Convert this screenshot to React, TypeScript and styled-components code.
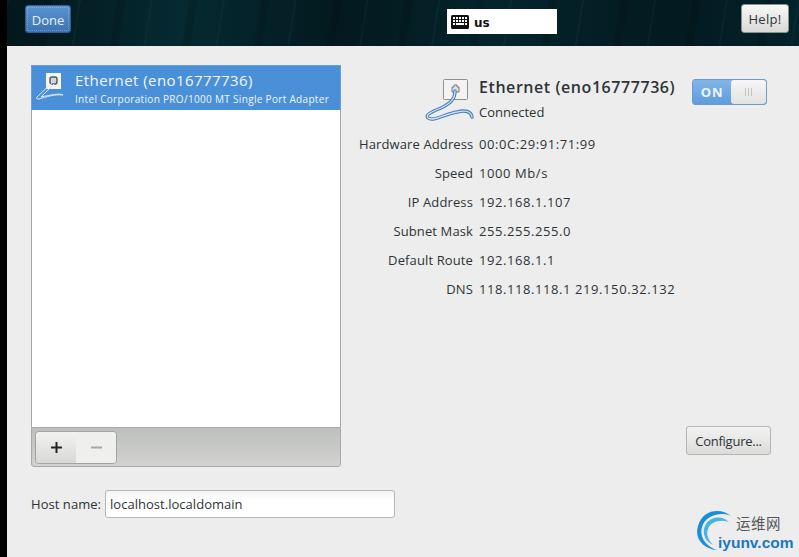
import React from 'react';
import styled, { createGlobalStyle } from 'styled-components';

const GlobalStyle = createGlobalStyle`
    html, body {
        margin: 0;
        padding: 0;
        height: 100%;
        background: #000;
        overflow: hidden;
    }
    body {
        font-family: "Open Sans", "Noto Sans", "Noto Sans CJK SC", sans-serif;
        font-size: 13px;
        color: #2e3436;
    }
`;

const Screen = styled.div`
    width: 799px;
    height: 557px;
    display: flex;
    background: #000;
`;

const Main = styled.div`
    position: relative;
    margin-left: 7px;
    flex: 1;
    display: flex;
    flex-direction: column;
    background: #ededed;
`;

const Header = styled.header`
    height: 46px;
    box-sizing: border-box;
    padding: 5px 10px 0 18px;
    display: grid;
    grid-template-columns: 422px 110px 1fr;
    align-items: start;
    background:
        repeating-linear-gradient(99deg, rgba(60, 120, 125, 0.07) 0 2px, rgba(0, 0, 0, 0) 2px 38px, rgba(0, 0, 0, 0.12) 38px 46px, rgba(0, 0, 0, 0) 46px 71px),
        linear-gradient(90deg, #03171c 0%, #052a31 22%, #03191f 42%, #04242b 62%, #031a20 84%, #04222a 100%);
`;

const DoneButton = styled.button`
    width: 46px;
    height: 28px;
    padding: 2px 0 0;
    border: 1px solid #2f5f96;
    border-radius: 3px;
    background: linear-gradient(#5a93cf, #3d73b4);
    outline: 1px dotted rgba(255, 255, 255, 0.25);
    outline-offset: -3px;
    color: #e8eef5;
    font: inherit;
`;

const Keyboard = styled.div`
    margin-top: 4px;
    width: 110px;
    height: 25px;
    box-sizing: border-box;
    padding-left: 4px;
    display: flex;
    align-items: center;
    gap: 5px;
    background: #fff;
    color: #111;
    font-family: "DejaVu Sans", sans-serif;
    font-weight: 700;
    font-size: 12px;
`;

const KeyboardLabel = styled.span`
    padding-top: 3px;
`;

const HelpButton = styled.button`
    justify-self: end;
    margin-top: -1px;
    width: 48px;
    height: 29px;
    padding: 0;
    border: 1px solid #8a8f90;
    border-radius: 3px;
    background: linear-gradient(#f7f7f6, #d9d9d7);
    color: #2e3436;
    font: inherit;
    letter-spacing: 0.3px;
`;

const Body = styled.div`
    flex: 1;
    display: grid;
    grid-template-columns: 310px 1fr;
    column-gap: 10px;
    padding: 19px 28px 0 24px;
`;

const LeftColumn = styled.div`
    display: flex;
    flex-direction: column;
`;

const ListBox = styled.div`
    height: 362px;
    box-sizing: border-box;
    border: 1px solid #a4a6a4;
    border-bottom: none;
    background: #fff;
`;

const ListRow = styled.div`
    height: 45px;
    box-sizing: border-box;
    margin: -1px -1px 0;
    display: flex;
    align-items: flex-start;
    background: #4a90d9;
    border: 1px solid #6a9fd6;
    border-bottom: none;
    color: #f2f6fb;
`;

const RowIcon = styled.div`
    width: 43px;
    flex: none;
    padding: 6px 0 0 4px;
    box-sizing: border-box;
`;

const RowText = styled.div`
    display: flex;
    flex-direction: column;
`;

const RowTitle = styled.div`
    margin-top: 3px;
    font-size: 15px;
    line-height: 22px;
    letter-spacing: 0.43px;
`;

const RowSub = styled.div`
    font-size: 10px;
    line-height: 16px;
    letter-spacing: 0.32px;
    white-space: nowrap;
`;

const ListToolbar = styled.div`
    height: 40px;
    box-sizing: border-box;
    padding: 3px 0 0 3px;
    border: 1px solid #a9aba8;
    border-radius: 0 0 3px 3px;
    background: linear-gradient(#bdbfbc, #d2d3d0);
`;

const ButtonGroup = styled.div`
    display: inline-flex;
    height: 33px;
    box-sizing: border-box;
    border: 1px solid #a2a4a2;
    border-radius: 4px;
    overflow: hidden;
`;

const ToolButton = styled.div<{ $disabled?: boolean }>`
    width: 40px;
    display: flex;
    align-items: center;
    justify-content: center;
    background: ${(p) => (p.$disabled ? '#efefee' : 'linear-gradient(#f2f2f1, #d8d8d6)')};
    color: ${(p) => (p.$disabled ? '#a6a8a6' : '#222')};
`;

const HostRow = styled.div`
    margin-top: 23px;
    width: max-content;
    display: flex;
    align-items: center;
    gap: 6px;
`;

const HostLabel = styled.span`
    width: 68px;
    white-space: nowrap;
    letter-spacing: 0.05px;
`;

const HostInput = styled.div`
    width: 290px;
    height: 28px;
    box-sizing: border-box;
    padding-left: 4px;
    display: flex;
    align-items: center;
    border: 1px solid #b5b7b5;
    border-radius: 3px;
    background: linear-gradient(#f4f4f4, #fff 40%);
    white-space: nowrap;
    letter-spacing: 0.03px;
`;

const RightColumn = styled.div`
    display: flex;
    flex-direction: column;
`;

const DeviceHead = styled.div`
    display: flex;
    height: 60px;
    padding-left: 66px;
`;

const DeviceIcon = styled.div`
    width: 62px;
    flex: none;
    padding: 14px 0 0 8px;
    box-sizing: border-box;
`;

const DeviceText = styled.div`
    width: 209px;
    flex: none;
    padding-top: 12px;
`;

const DeviceName = styled.div`
    font-size: 16px;
    line-height: 20px;
    font-weight: 600;
    letter-spacing: 0.56px;
    white-space: nowrap;
`;

const DeviceState = styled.div`
    margin-top: 6px;
    line-height: 18px;
`;

const Toggle = styled.div`
    margin-top: 14px;
    margin-left: 4px;
    width: 75px;
    flex: none;
    height: 26px;
    box-sizing: border-box;
    display: flex;
    border: 1px solid #6b9bd1;
    border-radius: 3px;
    background: linear-gradient(#82b6ea, #5f9bdc);
    overflow: hidden;
`;

const ToggleOn = styled.div`
    width: 38px;
    display: flex;
    align-items: center;
    justify-content: center;
    color: #edf4fb;
    font-weight: 700;
    letter-spacing: 0.8px;
`;

const ToggleKnob = styled.div`
    flex: 1;
    display: flex;
    align-items: center;
    justify-content: center;
    gap: 2px;
    background: linear-gradient(#f6f6f5, #e2e2e0);
    border-radius: 3px;
`;

const KnobLine = styled.span`
    width: 1px;
    height: 8px;
    background: #c2c4c2;
`;

const InfoGrid = styled.dl`
    margin: 10px 0 0;
    padding-left: 8px;
    display: grid;
    grid-template-columns: 114px 1fr;
    column-gap: 6px;
    grid-auto-rows: 29px;
    line-height: 18px;
`;

const InfoLabel = styled.dt`
    text-align: right;
    white-space: nowrap;
    letter-spacing: 0.12px;
`;

const InfoValue = styled.dd`
    margin: 0;
    white-space: nowrap;
    letter-spacing: 0.58px;
`;

const ConfigureRow = styled.div`
    margin-top: 117px;
    display: flex;
    justify-content: flex-end;
`;

const ConfigureButton = styled.button`
    width: 85px;
    height: 29px;
    padding: 0;
    border: 1px solid #b4b6b4;
    border-radius: 3px;
    background: linear-gradient(#f2f2f1, #dcdcda);
    color: #2e3436;
    font: inherit;
    letter-spacing: -0.25px;
`;

const Watermark = styled.div`
    position: absolute;
    left: 688px;
    top: 509px;
    width: 104px;
    height: 44px;
`;

const WatermarkCn = styled.div`
    position: absolute;
    left: 41px;
    top: 7px;
    font-family: "Noto Sans CJK SC", sans-serif;
    font-size: 14.5px;
    line-height: 14px;
    letter-spacing: 0.5px;
    color: #555;
`;

const WatermarkEn = styled.div`
    position: absolute;
    left: 23px;
    top: 26px;
    font-family: "Liberation Sans", sans-serif;
    font-weight: 700;
    font-size: 15.5px;
    line-height: 16px;
    color: #1a78c2;
`;

const SmallEthernetIcon = () => (
    <svg width="34" height="32" viewBox="0 0 34 32">
        <rect x="10" y="1" width="15" height="16" fill="#f4f4f2" />
        <rect x="14" y="5" width="7" height="7" rx="2" fill="#cfd6de" stroke="#555" strokeWidth="1.4" />
        <path d="M17 10 L1 25 C0 27 1 27 3 27 C10 25 18 22 27 23 C24 21 14 23 5 25 L18 12" fill="none" stroke="#dfe9f5" strokeWidth="1" />
    </svg>
);

const LargeEthernetIcon = () => (
    <svg width="50" height="44" viewBox="0 0 50 44">
        <rect x="18.5" y="0.5" width="24" height="20" rx="1" fill="#f3f3f2" stroke="#8f918f" />
        <path d="M27 13 V8 L29 8 V6 H32 V8 L34 8 V13 Z" fill="#e2e2e0" stroke="#777" />
        <path d="M30 12 C30 20 26 24 16 29 C6 33 0 36 3 39 C8 43 20 35 32 33 C40 31 46 32 47 38" fill="none" stroke="#4c7fb5" strokeWidth="3.4" strokeLinecap="round" />
        <path d="M30 12 C30 20 26 24 16 29 C6 33 0 36 3 39 C8 43 20 35 32 33 C40 31 46 32 47 38" fill="none" stroke="#cfe0f1" strokeWidth="1.3" strokeLinecap="round" />
    </svg>
);

const KeyboardIcon = () => (
    <svg width="18" height="14" viewBox="0 0 18 14">
        <rect x="0" y="0" width="18" height="14" rx="1.5" fill="#111" />
        <path d="M2 2h2v2H2zM5 2h2v2H5zM8 2h2v2H8zM11 2h2v2h-2zM14 2h2v2h-2zM2 5h2v2H2zM5 5h2v2H5zM8 5h2v2H8zM11 5h2v2h-2zM14 5h2v2h-2zM2 8h2v2H2zM5 8h8v2H5zM14 8h2v2h-2z" fill="#fff" />
    </svg>
);

const PlusIcon = () => (
    <svg width="11" height="11" viewBox="0 0 11 11">
        <path d="M4.5 0h2v4.5H11v2H6.5V11h-2V6.5H0v-2h4.5z" fill="currentColor" />
    </svg>
);

const MinusIcon = () => (
    <svg width="11" height="11" viewBox="0 0 11 11">
        <rect x="0" y="4.5" width="11" height="2" fill="currentColor" />
    </svg>
);

const LogoSwirl = () => (
    <svg width="42" height="44" viewBox="0 0 42 44" style={{ position: 'absolute', left: 0, top: 0 }}>
        <path d="M36 7 C27 -1 8 -1 3 17 C-1 30 9 40 22 41 C11 37 4 28 7 18 C10 7 25 2 36 7 Z" fill="#1a8fd6" />
        <path d="M34 13 C25 5 12 8 9 20 C8 28 12 33 18 36 C13 31 11 25 13 20 C15 13 25 10 34 13 Z" fill="#45b3e6" />
    </svg>
);

const details: [string, string][] = [
    ['Hardware Address', '00:0C:29:91:71:99'],
    ['Speed', '1000 Mb/s'],
    ['IP Address', '192.168.1.107'],
    ['Subnet Mask', '255.255.255.0'],
    ['Default Route', '192.168.1.1'],
    ['DNS', '118.118.118.1 219.150.32.132'],
];

export default function App() {
    return (
        <Screen>
            <GlobalStyle />
            <Main>
                <Header>
                    <DoneButton>Done</DoneButton>
                    <Keyboard>
                        <KeyboardIcon />
                        <KeyboardLabel>us</KeyboardLabel>
                    </Keyboard>
                    <HelpButton>Help!</HelpButton>
                </Header>
                <Body>
                    <LeftColumn>
                        <ListBox>
                            <ListRow>
                                <RowIcon>
                                    <SmallEthernetIcon />
                                </RowIcon>
                                <RowText>
                                    <RowTitle>Ethernet (eno16777736)</RowTitle>
                                    <RowSub>Intel Corporation PRO/1000 MT Single Port Adapter</RowSub>
                                </RowText>
                            </ListRow>
                        </ListBox>
                        <ListToolbar>
                            <ButtonGroup>
                                <ToolButton>
                                    <PlusIcon />
                                </ToolButton>
                                <ToolButton $disabled>
                                    <MinusIcon />
                                </ToolButton>
                            </ButtonGroup>
                        </ListToolbar>
                        <HostRow>
                            <HostLabel>Host name:</HostLabel>
                            <HostInput>localhost.localdomain</HostInput>
                        </HostRow>
                    </LeftColumn>
                    <RightColumn>
                        <DeviceHead>
                            <DeviceIcon>
                                <LargeEthernetIcon />
                            </DeviceIcon>
                            <DeviceText>
                                <DeviceName>Ethernet (eno16777736)</DeviceName>
                                <DeviceState>Connected</DeviceState>
                            </DeviceText>
                            <Toggle>
                                <ToggleOn>ON</ToggleOn>
                                <ToggleKnob>
                                    <KnobLine />
                                    <KnobLine />
                                    <KnobLine />
                                </ToggleKnob>
                            </Toggle>
                        </DeviceHead>
                        <InfoGrid>
                            {details.map(([label, value]) => (
                                <React.Fragment key={label}>
                                    <InfoLabel>{label}</InfoLabel>
                                    <InfoValue>{value}</InfoValue>
                                </React.Fragment>
                            ))}
                        </InfoGrid>
                        <ConfigureRow>
                            <ConfigureButton>Configure...</ConfigureButton>
                        </ConfigureRow>
                    </RightColumn>
                </Body>
                <Watermark>
                    <LogoSwirl />
                    <WatermarkCn>运维网</WatermarkCn>
                    <WatermarkEn>iyunv.com</WatermarkEn>
                </Watermark>
            </Main>
        </Screen>
    );
}
